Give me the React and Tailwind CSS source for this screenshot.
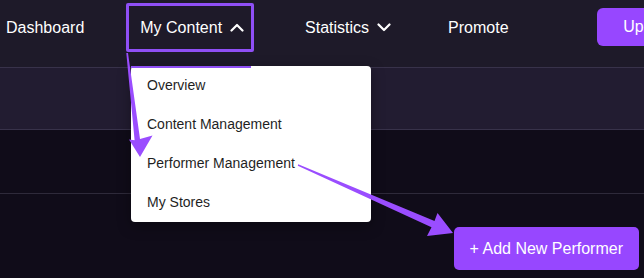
import React from "react";

function Chevron({ up }) {
  return (
    <svg width="14" height="9" viewBox="0 0 14 9" fill="none" className="ml-[8px]">
      <path
        d={up ? "M1.5 7.5L7 2L12.5 7.5" : "M1.5 1.5L7 7L12.5 1.5"}
        stroke="white"
        strokeWidth="2.2"
        strokeLinecap="round"
        strokeLinejoin="round"
      />
    </svg>
  );
}

const menuItems = ["Overview", "Content Management", "Performer Management", "My Stores"];

export default function App() {
  return (
    <div className="relative w-[644px] h-[278px] overflow-hidden bg-[#100c19] font-['Liberation_Sans',Arial,sans-serif]">
      {/* top nav */}
      <nav className="flex items-start h-[67px] bg-[#1e1a29] pt-[3px] text-white text-[16px]">
        <div className="h-[49px] flex items-center pl-[6px]">Dashboard</div>
        <div className="ml-[42px] h-[49px] flex items-center border-[3px] border-[#8f4ff5] rounded-[2px] pl-[11px] pr-[7px]">
          My Content
          <Chevron up />
        </div>
        <div className="ml-[51px] h-[49px] flex items-center">
          Statistics
          <Chevron />
        </div>
        <div className="ml-[57px] h-[49px] flex items-center">Promote</div>
        <div className="ml-auto mr-[-56px] mt-[5px] h-[38px] shrink-0 flex items-center px-[26px] bg-[#9747ff] rounded-[6px] whitespace-nowrap">
          Upload
        </div>
      </nav>

      {/* page header band */}
      <div className="h-[63px] bg-[#221c31] border-t border-b border-[#38324a]" />

      {/* table header row */}
      <div className="h-[64px] border-b border-[#2e2a3a]" />

      {/* actions */}
      <div className="flex justify-end pt-[33px] pr-[5px]">
        <button className="h-[43px] px-[16px] bg-[#9747ff] text-white text-[16px] rounded-[5px]">
          + Add New Performer
        </button>
      </div>

      {/* dropdown menu */}
      <div className="absolute left-[131px] top-[66px] w-[240px] bg-white rounded-[4px] shadow-[0_4px_14px_rgba(0,0,0,0.35)] text-[14px] text-[#1f1f1f]">
        <div className="absolute left-0 top-0 h-[2px] w-[120px] bg-[#8f4ff5]" />
        {menuItems.map((item) => (
          <div key={item} className="h-[39px] flex items-center pl-[16px]">
            {item}
          </div>
        ))}
      </div>

      {/* annotation arrows */}
      <svg className="absolute inset-0 pointer-events-none" width="644" height="278" viewBox="0 0 644 278">
        <polygon
          fill="#9a4dff"
          points="126.3,53 128,53 140,139 152.5,135.5 140,157 129,139.5 134.6,140.3"
        />
        <polygon
          fill="#9a4dff"
          points="298.2,164.3 434.5,221 437.5,213 453,233 427,236 431.5,227.2 297.8,165.8"
        />
      </svg>
    </div>
  );
}
